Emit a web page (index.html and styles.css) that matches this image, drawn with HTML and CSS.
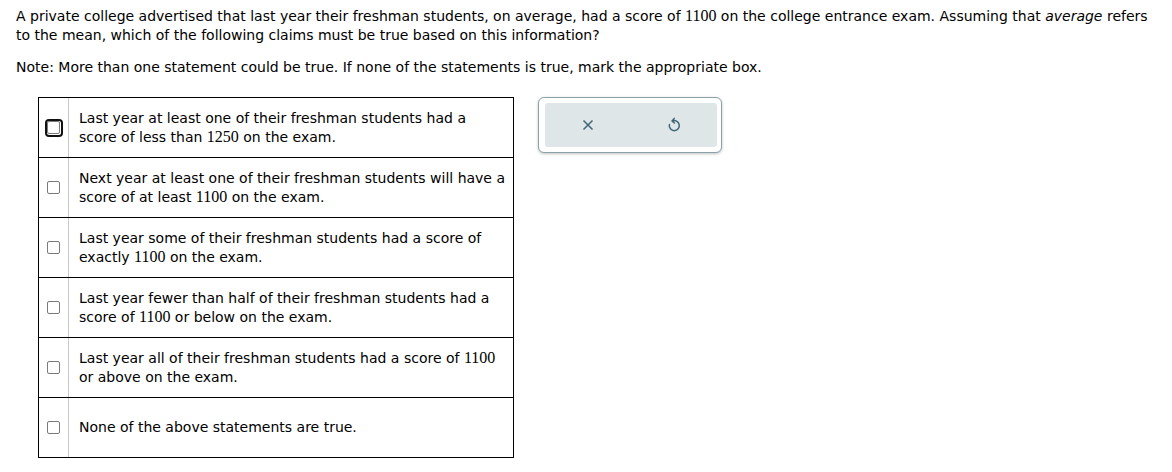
FILE: index.html
```html
<!DOCTYPE html>
<html>
<head>
<meta charset="utf-8">
<link rel="stylesheet" href="styles.css">
</head>
<body>
<div class="page">
  <p class="question">A private college advertised that last year their freshman students, on average, had a score of <span class="num">1100</span> on the college entrance exam. Assuming that <em>average</em> refers to the mean, which of the following claims must be true based on this information?</p>
  <p class="note">Note: More than one statement could be true. If none of the statements is true, mark the appropriate box.</p>
  <div class="work">
    <div class="choices">
      <div class="row">
        <div class="box-cell"><span class="cb focused"><span class="cb-inner"></span></span></div>
        <div class="text-cell">Last year at least one of their freshman students had a score of less than <span class="num">1250</span> on the exam.</div>
      </div>
      <div class="row">
        <div class="box-cell"><span class="cb"></span></div>
        <div class="text-cell">Next year at least one of their freshman students will have a score of at least <span class="num">1100</span> on the exam.</div>
      </div>
      <div class="row">
        <div class="box-cell"><span class="cb"></span></div>
        <div class="text-cell">Last year some of their freshman students had a score of exactly <span class="num">1100</span> on the exam.</div>
      </div>
      <div class="row">
        <div class="box-cell"><span class="cb"></span></div>
        <div class="text-cell">Last year fewer than half of their freshman students had a score of <span class="num">1100</span> or below on the exam.</div>
      </div>
      <div class="row">
        <div class="box-cell"><span class="cb"></span></div>
        <div class="text-cell">Last year all of their freshman students had a score of <span class="num">1100</span> or above on the exam.</div>
      </div>
      <div class="row">
        <div class="box-cell"><span class="cb"></span></div>
        <div class="text-cell">None of the above statements are true.</div>
      </div>
    </div>
    <div class="tools">
      <div class="tools-inner">
        <span class="tool">
          <svg width="12" height="12" viewBox="0 0 12 12"><path d="M1.5 1.5 L10.5 10.5 M10.5 1.5 L1.5 10.5" stroke="#3f6676" stroke-width="1.5" fill="none"/></svg>
        </span>
        <span class="tool">
          <svg width="14" height="16" viewBox="0 0 14 16"><path d="M7.2 1.4 L5 3.9 L7.4 6 M5.2 4.1 A5 5 0 1 1 2.4 7.6" stroke="#3f6676" stroke-width="1.5" fill="none" stroke-linecap="round" stroke-linejoin="round"/></svg>
        </span>
      </div>
    </div>
  </div>
</div>
</body>
</html>
```
FILE: styles.css
```css
html, body {
  margin: 0;
  padding: 0;
  background: #ffffff;
}
body {
  font-family: "DejaVu Sans", Verdana, sans-serif;
  font-size: 14px;
  color: #000000;
}
.page {
  padding: 7px 16px 0 16px;
}
.question {
  margin: 0;
  line-height: 19px;
}
.note {
  margin: 13px 0 0 0;
  line-height: 19px;
}
.num {
  font-family: "Liberation Serif", "Times New Roman", serif;
  font-size: 16px;
  line-height: 1;
}
.work {
  display: flex;
  align-items: flex-start;
  gap: 24px;
  margin: 20px 0 0 22px;
}
.choices {
  width: 474px;
  border: 1px solid #000;
}
.row {
  display: flex;
  height: 59px;
  border-top: 1px solid #000;
}
.row:first-child {
  border-top: none;
}
.box-cell {
  width: 29px;
  border-right: 1px solid #c8c8c8;
  display: flex;
  align-items: center;
  justify-content: center;
  flex: none;
}
.cb {
  display: block;
  width: 11px;
  height: 11px;
  border: 1px solid #7a7a7a;
  border-radius: 2px;
  background: #fff;
}
.cb.focused {
  width: 14px;
  height: 14px;
  border: 2.5px solid #111;
  border-radius: 4px;
  display: flex;
  align-items: center;
  justify-content: center;
  box-sizing: content-box;
}
.cb-inner {
  display: block;
  width: 13px;
  height: 13px;
  border: 1px solid #7a7a7a;
  border-radius: 2px;
  box-sizing: border-box;
}
.text-cell {
  flex: 1;
  padding: 0 5px 0 10px;
  line-height: 19px;
  align-self: center;
}
.tools {
  box-sizing: border-box;
  width: 184px;
  height: 56px;
  border: 1px solid #8aa2a8;
  border-radius: 6px;
  box-shadow: 0 1px 3px rgba(0,0,0,0.25);
  padding: 5px 4px 5px 6px;
  background: #fff;
}
.tools-inner {
  height: 100%;
  background: #dfe6e8;
  border-radius: 3px;
  display: flex;
  align-items: center;
  justify-content: space-around;
}
.tool {
  display: flex;
  align-items: center;
  justify-content: center;
  width: 40px;
  height: 30px;
}
```
